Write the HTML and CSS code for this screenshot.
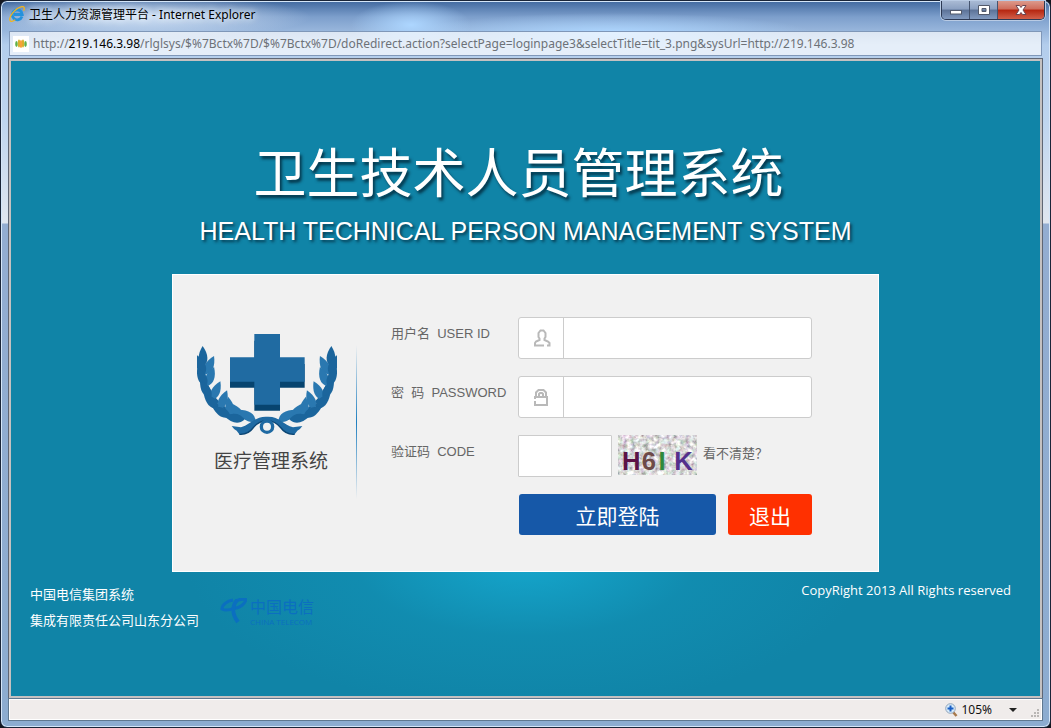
FILE: index.html
```html
<!DOCTYPE html>
<html lang="zh-CN">
<head>
<meta charset="utf-8">
<title>卫生人力资源管理平台</title>
<link rel="stylesheet" href="styles.css">
</head>
<body>
<div class="window">
  <header class="titlebar">
    <svg class="ie-icon" viewBox="0 0 16 16" aria-hidden="true">
      <path d="M13 10.500A5 5 0 1 1 13.300 8.500H5" fill="none" stroke="#2492dc" stroke-width="2.800"/>
      <path d="M1.200 15C-1 11 6 2.500 12 .8c4-1 3.600 2 2.600 4" fill="none" stroke="#f2b41c" stroke-width="1.300"/>
      <path d="M1.200 15c1 .8 3 .2 5-1.200" fill="none" stroke="#f2b41c" stroke-width="1.300"/>
    </svg>
    <span class="window-title">卫生人力资源管理平台 - Internet Explorer</span>
    <div class="window-controls">
      <button class="control" type="button" aria-label="最小化"><svg viewBox="0 0 14 12"><rect x="1.500" y="6.500" width="11" height="3.500" fill="#fff" stroke="#535a6b"/></svg></button>
      <button class="control" type="button" aria-label="最大化"><svg viewBox="0 0 14 12"><path d="M1.500 1.500h11v9h-11zM5 4.500v3h4v-3z" fill="#fff" fill-rule="evenodd" stroke="#535a6b"/></svg></button>
      <button class="control close" type="button" aria-label="关闭"><svg viewBox="0 0 14 12"><path d="M2 1.500h3.500L7 3.500l1.500-2H12L9 6l3 4.500H8.500L7 8.500l-1.500 2H2L5 6z" fill="#fff" stroke="#6b4550"/></svg></button>
    </div>
  </header>
  <div class="addressbar">
    <svg class="favicon" viewBox="0 0 16 16" aria-hidden="true">
      <rect width="16" height="16" fill="#fff"/>
      <ellipse cx="3.500" cy="8" rx="1.300" ry="3" fill="#5fb24a"/><ellipse cx="12.500" cy="8" rx="1.300" ry="3" fill="#5fb24a"/>
      <ellipse cx="6" cy="7.500" rx="1.200" ry="4" fill="#d9b02c"/><ellipse cx="10" cy="7.500" rx="1.200" ry="4" fill="#d9b02c"/>
      <ellipse cx="8" cy="8" rx="1.200" ry="4" fill="#f7a13a"/>
    </svg>
    <span class="url">http://<b>219.146.3.98</b>/rlglsys/$%7Bctx%7D/$%7Bctx%7D/doRedirect.action?selectPage=loginpage3&amp;selectTitle=tit_3.png&amp;sysUrl=http://219.146.3.98</span>
  </div>
  <main class="page">
    <h1 class="system-title">卫生技术人员管理系统</h1>
    <p class="system-subtitle">HEALTH TECHNICAL PERSON MANAGEMENT SYSTEM</p>
    <section class="card">
      <div class="brand">
        <svg class="emblem" viewBox="48 38 420 304" aria-hidden="true">
          <defs>
            <path id="leaf" d="M0 0C-18-14-17-36 0-62 17-36 18-14 0 0z"/>
            <g id="branch">
              <path d="M66 130C68 220 130 290 235 302" fill="none" stroke="#1b659c" stroke-width="7"/>
              <g fill="#2a78b0">
                <use href="#leaf" transform="translate(72 162) rotate(26)"/>
                <use href="#leaf" transform="translate(77 197) rotate(21)"/>
                <use href="#leaf" transform="translate(92 238) rotate(25)"/>
                <use href="#leaf" transform="translate(115 266) rotate(22)"/>
                <use href="#leaf" transform="translate(150 290) rotate(-8)"/>
                <use href="#leaf" transform="translate(186 298) rotate(-36)"/>
                <use href="#leaf" transform="translate(224 302) rotate(-56)"/>
              </g>
              <g fill="#1b659c">
                <use href="#leaf" transform="translate(67 138) rotate(-2)"/>
                <use href="#leaf" transform="translate(70 162) rotate(-20)"/>
                <use href="#leaf" transform="translate(76 197) rotate(-26)"/>
                <use href="#leaf" transform="translate(90 232) rotate(-32)"/>
                <use href="#leaf" transform="translate(112 264) rotate(-45)"/>
                <use href="#leaf" transform="translate(148 288) rotate(-61)"/>
                <use href="#leaf" transform="translate(190 297) rotate(-80)"/>
              </g>
              <path d="M258 288C222 286 208 312 180 320L152 316Q158 326 167 330L175 341Q202 342 216 322 234 300 258 300z" fill="#1f6aa3"/>
              <path d="M175 341Q202 342 216 322 234 300 258 300" fill="none" stroke="#0c4674" stroke-width="4"/>
            </g>
          </defs>
          <use href="#branch"/>
          <use href="#branch" transform="translate(516 0) scale(-1 1)"/>
          <circle cx="258" cy="318" r="17" fill="#f1f1f1" stroke="#1f6aa3" stroke-width="10"/>
          <path d="M220 60h77v70h74v71h-74v69h-77v-69h-73v-71h73z" fill="#07446f"/>
          <path d="M220 40h77v70h74v73h-74v69h-77v-69h-73v-73h73z" fill="#206ba2"/>
        </svg>
        <p class="brand-name">医疗管理系统</p>
      </div>
      <form class="login">
        <label for="user">用户名&nbsp; USER ID</label>
        <div class="field">
          <svg viewBox="0 0 18 18" aria-hidden="true"><path d="M11 16.500H2V14l1-1.500L6.500 11V9.500L5.500 8V4l2-2.500h3l2 2.500v4l-1 1.500V11l3.500 1.500 1.500 1.500v2.500H14" fill="none" stroke="#b9b9b9" stroke-width="2"/></svg>
          <input id="user" type="text">
        </div>
        <label for="password">密&nbsp; 码&nbsp; PASSWORD</label>
        <div class="field">
          <svg viewBox="0 0 18 18" aria-hidden="true"><path d="M2 13v4h12V9H2v2M3 9V4.500L5.500 2h5L13 4.500V9M6 9V6l1-1h2l1 1v3" fill="none" stroke="#b9b9b9" stroke-width="2"/></svg>
          <input id="password" type="password">
        </div>
        <label for="code">验证码&nbsp; CODE</label>
        <div class="code-row">
          <input id="code" type="text">
          <svg class="captcha" viewBox="0 0 80 40" role="img" aria-label="验证码图片">
            <filter id="noise" x="0" y="0" width="1" height="1">
              <feTurbulence type="fractalNoise" baseFrequency=".22" numOctaves="3" seed="6"/>
              <feColorMatrix values=".8 .7 .5 0 -.3 .4 1.100 .5 0 -.3 .5 .7 .8 0 -.3 0 0 0 0 1"/>
            </filter>
            <rect width="80" height="40" filter="url(#noise)"/>
            <g class="captcha-text">
              <text x="4" y="35" fill="#5c1247">H</text>
              <text x="24" y="35" fill="#6e4a48">6</text>
              <text x="41" y="35" fill="#2e8a3a">I</text>
              <text x="57" y="35" fill="#54308c">K</text>
            </g>
          </svg>
          <a class="refresh" href="#">看不清楚？</a>
        </div>
        <div class="actions">
          <button class="submit" type="submit">立即登陆</button>
          <button class="exit" type="button">退出</button>
        </div>
      </form>
    </section>
    <footer class="footer">
      <p class="company">中国电信集团系统<br>集成有限责任公司山东分公司</p>
      <div class="telecom">
        <svg viewBox="0 0 27 26" aria-hidden="true"><g fill="none" stroke="#0b6fc0"><path d="M13 2C7 3 2 7 2 11c4 2 8 1 12-1" stroke-width="3"/><path d="M16 3c3-2 7-2 10-1.500C25 6 20 10 14 10.500" stroke-width="3"/><path d="M17 2c-4 5-6 13 1 22" stroke-width="4"/></g></svg>
        <div><span class="telecom-cn">中国电信</span><span class="telecom-en">CHINA TELECOM</span></div>
      </div>
      <p class="copyright">CopyRight 2013 All Rights reserved</p>
    </footer>
  </main>
  <div class="statusbar">
    <button class="zoom" type="button">
      <svg class="zoom-icon" viewBox="0 0 13 14" aria-hidden="true"><path d="M8 9l3.500 4" stroke="#a8794b" stroke-width="2.500"/><circle cx="5.500" cy="5.500" r="4.800" fill="#d7ebfb" stroke="#92a5ba"/><path d="M5.500 2.500v6M2.500 5.500h6" stroke="#1a5fc4" stroke-width="2"/></svg>
      <span>105%</span>
      <svg class="caret" viewBox="0 0 8 4" aria-hidden="true"><path d="M0 0h8L4 4z" fill="#222"/></svg>
    </button>
    <svg class="grip" viewBox="0 0 8 8" aria-hidden="true"><path d="M6 0h2v2H6zM3 3h2v2H3zM6 3h2v2H6zM0 6h2v2H0zM3 6h2v2H3zM6 6h2v2H6z" fill="#b9b6b4"/></svg>
  </div>
</div>
</body>
</html>
```
FILE: styles.css
```css
* { box-sizing: border-box; }
body {
  margin: 0;
  background: #15171f;
  font-family: "Noto Sans", "Noto Sans CJK SC", sans-serif;
  font-size: 12px;
}
h1, p { margin: 0; font-weight: normal; }
button, input { font: inherit; border: 0; padding: 0; margin: 0; }
svg { display: block; flex: none; }

.window {
  display: flex;
  flex-direction: column;
  min-height: 100vh;
  padding: 0 8px 7px;
  border: 1px solid #1a2538;
  border-radius: 7px;
  box-shadow: inset 0 0 0 1px #d5e6f8;
  background:
    radial-gradient(ellipse 170px 22px at 140px 16px, rgba(220, 234, 250, .9), transparent),
    radial-gradient(ellipse 60px 24px at 410px 24px, #add6ff, transparent),
    radial-gradient(ellipse 200px 20px at 610px 32px, #add6ff, transparent),
    linear-gradient(to bottom, #41699f 0, #7d9fcc 16px, #b3cdec 44px, #bed5ef 120px, #e0e6ef 222px, #93add1 223px, #8cacd0 100%);
}

.titlebar {
  display: flex;
  align-items: center;
  height: 29px;
  padding-bottom: 3px;
  gap: 4px;
}
.ie-icon { width: 16px; height: 16px; }
.window-title { color: #000; text-shadow: 0 0 8px #fff, 0 0 6px #dcebff; }
.window-controls {
  display: flex;
  align-self: flex-start;
  margin-left: auto;
  margin-right: -3px;
  border: 1px solid #2d3a54;
  border-top: 0;
  border-radius: 0 0 5px 5px;
  overflow: hidden;
  box-shadow: 0 0 0 1px #b9cbe4;
}
.control {
  display: grid;
  place-items: center;
  width: 28px;
  height: 18px;
  border-right: 1px solid #45546f;
  background: linear-gradient(#a9bad4 0, #8ba0c1 45%, #5c7297 50%, #829bc0 100%);
}
.control svg { width: 14px; height: 12px; }
.control.close {
  width: 46px;
  border-right: 0;
  background: linear-gradient(#dc9a8c 0, #cf6c5a 45%, #b5250f 50%, #d2604a 100%);
}

.addressbar {
  display: flex;
  align-items: center;
  gap: 4px;
  height: 25px;
  padding: 0 3px;
  margin-top: 1px;
  border: 1px solid #7f97b8;
  background: rgba(255, 255, 255, .66);
}
.favicon { width: 16px; height: 16px; }
.url { color: #6d7278; white-space: nowrap; }
.url b { color: #000; font-weight: normal; }

.page {
  flex: 1;
  display: flex;
  flex-direction: column;
  margin-top: 3px;
  padding: 73px 19px 0;
  border: 2px solid #c4c1c1;
  box-shadow: 0 0 0 1px #5f6674;
  background:
    radial-gradient(ellipse 340px 150px at 50% 500px, #15a6cc, rgba(18, 148, 184, .5) 50%, rgba(16, 132, 167, 0)),
    #1084a7;
  color: #fff;
}
.system-title {
  align-self: center;
  margin-right: 14px;
  font-family: "Noto Sans CJK SC", sans-serif;
  font-size: 53px;
  line-height: 72px;
  text-shadow: 2px 3px 3px rgba(0, 30, 45, .75);
}
.system-subtitle {
  align-self: center;
  margin-top: 7px;
  font-family: "Liberation Sans", sans-serif;
  font-size: 25px;
  line-height: 36px;
  text-shadow: 2px 2px 3px rgba(0, 30, 45, .75);
  white-space: nowrap;
}

.card {
  display: flex;
  align-self: center;
  width: 707px;
  margin-top: 25px;
  border: 1px solid #fff;
  background: #f1f1f1;
  color: #666;
}
.brand {
  width: 184px;
  margin: 58px 0 72px;
  padding-left: 24px;
  background: linear-gradient(rgba(31, 127, 192, 0), #1f7fc0 50%, rgba(31, 127, 192, 0)) right 12px / 1px 154px no-repeat;
}
.emblem { width: 140px; height: 102px; }
.brand-name {
  width: 148px;
  padding-top: 10px;
  font-size: 19px;
  line-height: 32px;
  text-align: center;
  color: #444;
}
.login {
  display: grid;
  grid-template-columns: 127px 294px;
  grid-auto-rows: 42px;
  row-gap: 17px;
  margin: 42px 0 35px 34px;
  font-family: "Liberation Sans", "Noto Sans CJK SC", sans-serif;
  font-size: 13px;
}
.login label { line-height: 34px; }
.field {
  display: flex;
  align-items: center;
  padding-left: 14px;
  gap: 12px;
  border: 1px solid #ccc;
  border-radius: 3px;
  background: #fff;
}
.field svg { width: 18px; height: 18px; }
.field input {
  flex: 1;
  min-width: 0;
  height: 40px;
  padding: 0 8px;
  border-left: 1px solid #ccc;
  background: transparent;
}
.code-row { display: flex; gap: 6px; }
.code-row input {
  width: 94px;
  padding: 0 8px;
  border: 1px solid #ccc;
  border-radius: 1px;
  background: #fff;
}
.captcha { width: 79px; height: 40px; }
.captcha-text { font: bold 26px "Liberation Sans", sans-serif; }
.refresh { line-height: 38px; color: #666; text-decoration: none; }
.actions { grid-column: 2; display: flex; gap: 12px; }
.actions button {
  height: 41px;
  border-radius: 3px;
  font-size: 21px;
  color: #fff;
}
.actions .submit { flex: 1; margin-left: 1px; background: #1658a8; }
.actions .exit { width: 84px; background: #ff3000; }

.footer {
  display: flex;
  align-items: flex-start;
  padding: 9px 10px 0 0;
  font-family: "Open Sans", "Noto Sans CJK SC", sans-serif;
  font-size: 13px;
}
.company { line-height: 26px; }
.telecom {
  display: flex;
  gap: 3px;
  margin: 17px 0 0 21px;
  color: #0b6fc0;
}
.telecom svg { width: 27px; height: 26px; }
.telecom span { display: block; }
.telecom-cn { font-size: 16px; line-height: 18px; }
.telecom-en { font-size: 8px; line-height: 12px; white-space: nowrap; }
.copyright { margin-left: auto; line-height: 18px; }

.statusbar {
  display: flex;
  align-items: center;
  justify-content: flex-end;
  height: 21px;
  margin-top: 1px;
  padding-right: 2px;
  border: 1px solid #fff;
  outline: 1px solid #5f7890;
  background: #f0eceb;
}
.zoom { display: flex; align-items: center; gap: 3px; background: none; color: #111; }
.zoom-icon { width: 13px; height: 14px; }
.caret { width: 8px; height: 4px; margin-left: 14px; }
.grip { align-self: flex-end; width: 8px; height: 8px; margin: 0 0 2px 14px; }
```
